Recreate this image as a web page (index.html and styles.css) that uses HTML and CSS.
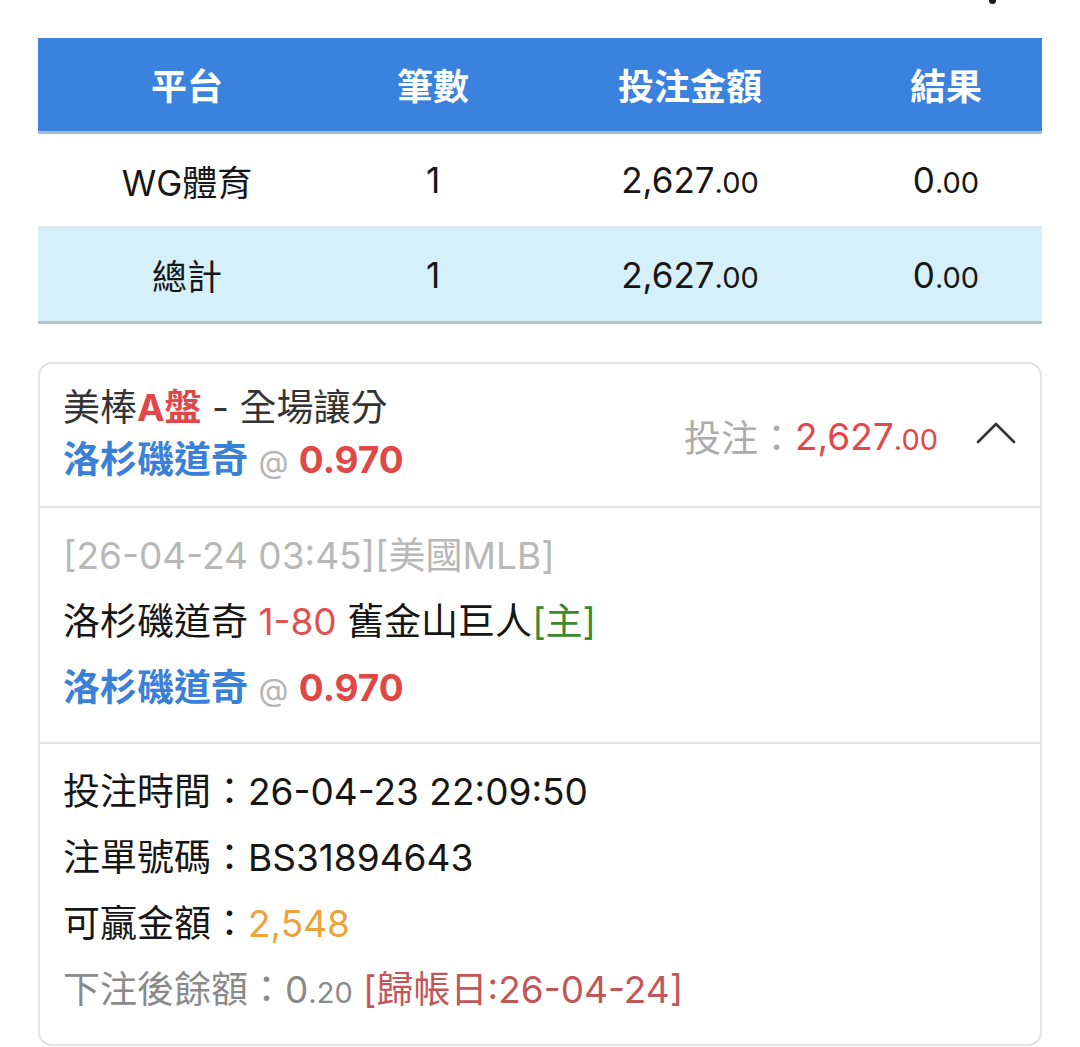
FILE: index.html
```html
<!DOCTYPE html>
<html lang="zh-Hant">
<head>
<meta charset="utf-8">
<title>投注紀錄</title>
<link rel="stylesheet" href="styles.css">
</head>
<body>
<div class="topbar"><span class="dot"></span></div>
<div class="page">
  <div class="table">
    <div class="row head">
      <div class="cell">平台</div>
      <div class="cell">筆數</div>
      <div class="cell">投注金額</div>
      <div class="cell">結果</div>
    </div>
    <div class="row body">
      <div class="cell">WG體育</div>
      <div class="cell">1</div>
      <div class="cell">2,627<span class="dec">.00</span></div>
      <div class="cell">0<span class="dec">.00</span></div>
    </div>
    <div class="row total">
      <div class="cell">總計</div>
      <div class="cell">1</div>
      <div class="cell">2,627<span class="dec">.00</span></div>
      <div class="cell">0<span class="dec">.00</span></div>
    </div>
  </div>

  <div class="card">
    <div class="card-head">
      <div class="head-left">
        <div class="line">美棒<span class="red-m">A盤</span> - 全場讓分</div>
        <div class="line"><span class="team">洛杉磯道奇</span> <span class="at">@</span> <span class="odds">0.970</span></div>
      </div>
      <div class="head-right">
        <span class="bet-label">投注：</span><span class="bet-amt">2,627<span class="dec">.00</span></span>
        <svg class="chev" width="40" height="24" viewBox="0 0 40 24"><path d="M2 21 L20 3 L38 21" fill="none" stroke="#333" stroke-width="2.6" stroke-linecap="round" stroke-linejoin="round"/></svg>
      </div>
    </div>
    <div class="section">
      <div class="line muted">[26-04-24 03:45][美國MLB]</div>
      <div class="line">洛杉磯道奇 <span class="score">1-80</span> 舊金山巨人<span class="home">[主]</span></div>
      <div class="line"><span class="team">洛杉磯道奇</span> <span class="at">@</span> <span class="odds">0.970</span></div>
    </div>
    <div class="section last">
      <div class="line">投注時間：26-04-23 22:09:50</div>
      <div class="line">注單號碼：BS31894643</div>
      <div class="line">可贏金額：<span class="win">2,548</span></div>
      <div class="line grey">下注後餘額：0<span class="dec">.20</span> <span class="settle">[歸帳日:26-04-24]</span></div>
    </div>
  </div>
</div>
</body>
</html>
```

FILE: styles.css
```css
* { box-sizing: border-box; }

html, body {
  margin: 0;
  padding: 0;
  background: #ffffff;
}

body {
  font-family: "Inter", "Noto Sans CJK TC", sans-serif;
  color: #161616;
  width: 1080px;
}

.topbar {
  height: 38px;
  display: flex;
  justify-content: flex-start;
  padding-left: 989px;
}

.dot {
  display: block;
  width: 7px;
  height: 4px;
  background: #1a1a1a;
  border-radius: 0 0 4px 4px;
}

.page {
  padding: 0 38px;
}

.table {
  width: 1004px;
}

.row {
  display: grid;
  grid-template-columns: 298px 194px 320px 192px;
  align-items: center;
}

.cell {
  text-align: center;
  font-size: 35px;
}

.dec {
  font-size: 29px;
}

.head {
  height: 96px;
  background: #3b82df;
  border-bottom: 3px solid #a7bad3;
  padding-bottom: 2px;
}

.head .cell {
  color: #ffffff;
  font-weight: 700;
  font-size: 36px;
}

.body {
  height: 94px;
  background: #ffffff;
  border-bottom: 2px solid #e2e6ea;
}

.total {
  height: 96px;
  background: #d6f0fa;
  border-bottom: 3px solid #b6c4cc;
}

.card {
  margin-top: 38px;
  width: 1004px;
  border: 2px solid #e3e3e3;
  border-radius: 14px;
}

.line {
  font-size: 37px;
  line-height: 66px;
  white-space: nowrap;
}

.card-head {
  display: flex;
  justify-content: space-between;
  align-items: center;
  padding: 18px 24px 18px 23px;
}

.head-left .line {
  line-height: 52px;
  color: #333333;
}

.red-m {
  color: #e0474a;
  font-weight: 700;
}

.team {
  color: #3a80d8;
  font-weight: 700;
}

.at {
  color: #b5b5b5;
  font-size: 31px;
}

.odds {
  color: #e04848;
  font-weight: 700;
}

.head-right {
  display: flex;
  align-items: center;
  font-size: 37px;
  padding-top: 2px;
}

.bet-label {
  color: #ababab;
}

.bet-amt {
  color: #e0484a;
}

.chev {
  margin-left: 38px;
  margin-top: -6px;
}

.section {
  border-top: 2px solid #e5e5e5;
  padding: 15px 23px 19px;
}

.section.last {
  padding: 15px 23px 18px;
}

.muted {
  color: #b8b8b8;
}

.score {
  color: #e05252;
}

.home {
  color: #3c8a2e;
}

.win {
  color: #eea23a;
}

.grey {
  color: #8a8a8a;
}

.settle {
  color: #c2575a;
}
```
